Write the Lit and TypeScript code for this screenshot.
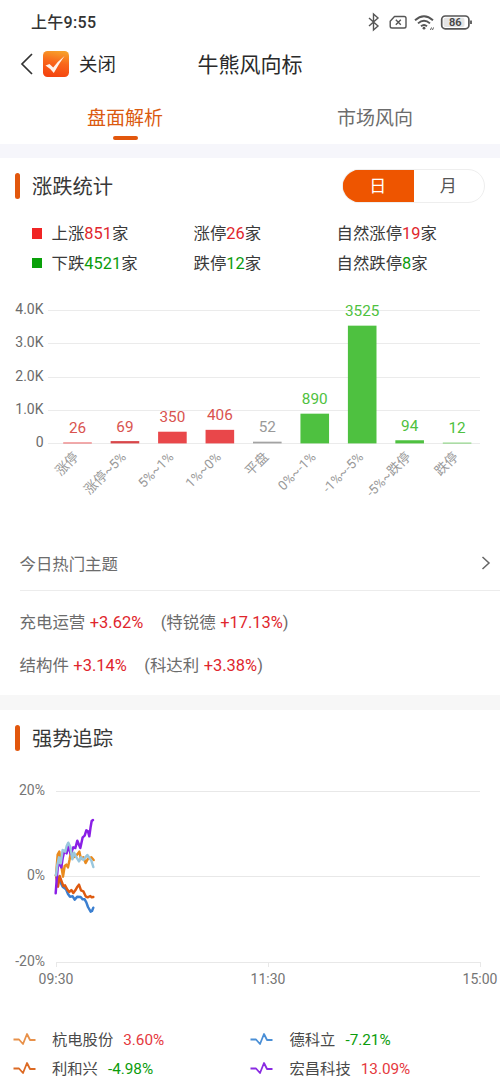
import { LitElement, html, css, svg } from "lit";
import { customElement, property } from "lit/decorators.js";

const RED = "#e9474a";
const GREEN = "#4ec140";
const GRAY = "#999999";

interface Bar {
  name: string;
  value: number;
  color: string;
  ink: string;
}

const BARS: Bar[] = [
  { name: "涨停", value: 26, color: RED, ink: "#d9534f" },
  { name: "涨停~5%", value: 69, color: "#d9474a", ink: "#d9534f" },
  { name: "5%~1%", value: 350, color: RED, ink: "#d9534f" },
  { name: "1%~0%", value: 406, color: RED, ink: "#d9534f" },
  { name: "平盘", value: 52, color: "#a3a3a3", ink: GRAY },
  { name: "0%~-1%", value: 890, color: GREEN, ink: GREEN },
  { name: "-1%~-5%", value: 3525, color: GREEN, ink: GREEN },
  { name: "-5%~跌停", value: 94, color: GREEN, ink: GREEN },
  { name: "跌停", value: 12, color: GREEN, ink: GREEN },
];

@customElement("bar-chart")
class BarChart extends LitElement {
  static styles = css`
    :host { display: block; height: 210px; }
    svg { display: block; }
    text { font-family: Roboto, "Noto Sans CJK SC", sans-serif; }
    .tick { font-size: 14px; fill: #6b6b6b; text-anchor: end; }
    .value { font-size: 15.3px; text-anchor: middle; }
    .name { font-size: 13.3px; fill: #999; text-anchor: end; }
  `;

  render() {
    const base = 148.4;
    const unit = 33.4 / 1000;
    return html`<svg width="500" height="210" viewBox="0 0 500 210">
      ${[0, 1, 2, 3, 4].map((k) => {
        const y = Math.round(base - k * 1000 * unit) + 0.5;
        return svg`<line x1="48" x2="480" y1=${y} y2=${y} stroke="#ebebeb"></line>
          <text class="tick" x="43.5" y=${y + 3.8}>${k ? k + ".0K" : "0"}</text>`;
      })}
      ${BARS.map((b, i) => {
        const x = 77.5 + i * 47.45;
        const h = Math.max(b.value * unit, 0.7);
        return svg`<rect x=${x - 14.3} y=${base - h} width="28.6" height=${h} fill=${b.color}></rect>
          <text class="value" x=${x} y=${base - h - 9.5} fill=${b.ink}>${b.value}</text>
          <text class="name" transform="translate(${x + 2} ${162.8}) rotate(-45)">${b.name}</text>`;
      })}
    </svg>`;
  }
}

const SERIES = [
  { color: "#3b7fd0", points: "168,316 174,322 178,330 188,350 198,358 204,372 210,380 218,379 224,389 232,380 242,381 248,388 254,388 259,397 264,411 272,425 276,423 280,413" },
  { color: "#de5a10", points: "168,315 174,350 179,318 184,332 190,348 195,346 202,359 208,366 214,360 220,369 226,361 231,352 237,344 243,361 250,364 257,379 263,382 271,378 275,382 280,381" },
  { color: "#e98a1e", points: "168,318 173,254 178,245 182,275 189,320 194,288 199,284 204,292 209,268 214,240 220,262 228,258 238,245 243,267 250,262 257,279 264,266 274,262 281,270" },
  { color: "#8a1fe6", points: "167,370 170,330 174,284 180,285 184,292 188,265 193,243 200,250 205,228 212,252 220,232 226,234 232,212 241,234 248,202 254,197 259,181 264,184 268,199 272,170 275,153 279,150" },
  { color: "#9ac7dd", points: "168,316 172,285 177,262 182,280 188,240 196,245 200,228 205,218 211,231 217,268 222,248 228,260 237,274 243,262 250,270 256,262 262,255 268,263 274,272 280,291" },
];

@customElement("trend-chart")
class TrendChart extends LitElement {
  static styles = css`
    :host { display: block; height: 225px; }
    svg { display: block; }
    text { font: 14px Roboto, sans-serif; fill: #757575; }
    .end { text-anchor: end; }
    .mid { text-anchor: middle; }
  `;

  render() {
    const rows: [string, number][] = [["20%", 21.5], ["0%", 106.5], ["-20%", 192.5]];
    const times: [string, number][] = [["09:30", 56], ["11:30", 268], ["15:00", 480]];
    return html`<svg width="500" height="225" viewBox="0 0 500 225">
      ${rows.map(([t, y]) => svg`<line x1="56" x2="480" y1=${y} y2=${y} stroke="#e8e8e8"></line>
        <text class="end" x="45" y=${y + 3.8}>${t}</text>`)}
      ${times.map(([t, x]) => svg`<line x1=${x + 0.5} x2=${x + 0.5} y1="192" y2="197" stroke="#e8e8e8"></line>
        <text class="mid" x=${x} y="213.8">${t}</text>`)}
      <g transform="scale(0.33333)">
        ${SERIES.map((s) => svg`<polyline points=${s.points} fill="none" stroke=${s.color}
          stroke-width="7.4" stroke-linejoin="round" stroke-linecap="round"></polyline>`)}
      </g>
    </svg>`;
  }
}

@customElement("legend-item")
class LegendItem extends LitElement {
  @property() name = "";
  @property() value = "";
  @property() color = "";

  static styles = css`
    :host { display: flex; align-items: center; height: 29px; font-size: 15.3px; color: #4a4a4a; }
    svg { width: 23px; height: 14px; margin-right: 16.5px; margin-top: -3px; }
    .up, .down { margin-left: 10px; }
    .up { color: #e5393e; }
    .down { color: #0c9c0c; }
  `;

  render() {
    return html`<svg viewBox="0 0 23 14">
        <path d="M0.5 7.5H6L10 12L14 2L17 8H22.5" fill="none" stroke=${this.color} stroke-width="1.8" stroke-linejoin="round"></path>
      </svg><span>${this.name}</span
      ><span class=${this.value.startsWith("-") ? "down" : "up"}>${this.value}</span>`;
  }
}

@customElement("app-root")
class AppRoot extends LitElement {
  static styles = css`
    :host { display: block; width: 500px; height: 1083px; overflow: hidden; background: #fff; color: #333;
      font-family: Roboto, "Noto Sans CJK SC", sans-serif; line-height: 1.2; white-space: nowrap; }
    * { box-sizing: border-box; }
    svg { display: block; flex: none; }
    .status { height: 44px; display: flex; align-items: center; justify-content: space-between; padding: 0 28px 0 31px; }
    .clock { font-size: 16px; font-weight: 500; color: #333; letter-spacing: 0.3px; padding-top: 2px; }
    .nav { height: 40px; display: grid; grid-template-columns: 1fr auto 1fr; align-items: center; }
    .left { display: flex; align-items: center; padding-left: 20px; }
    .logo { margin: 0 10px 0 9px; }
    .close { font-size: 18.4px; color: #2a2a2a; padding-top: 2px; }
    .title { font-size: 21px; color: #2a2a2a; padding-top: 3px; }
    .tabs { height: 60px; display: grid; grid-template-columns: 1fr 1fr; }
    .tab { display: flex; flex-direction: column; align-items: center; font-size: 19px; line-height: 24px; padding-top: 23px; color: #6c6c6c; }
    .tab.on { color: #db5a10; }
    .tab.on::after { content: ""; width: 25px; height: 4px; margin-top: 5px; border-radius: 2px; background: #e2570d; }
    .band { height: 14px; background: #f6f6fb; }
    .band.plain { height: 15px; background: #f7f7f7; }
    .head { height: 56px; display: flex; align-items: center; padding: 0 15.5px 0 15px; font-size: 20.3px; color: #383838; }
    .label { padding-top: 2px; }
    .accent { width: 5px; height: 26px; border-radius: 2.5px; background: #e2570d; margin-right: 12px; }
    .toggle { margin-left: auto; width: 143px; height: 34px; border-radius: 17px; overflow: hidden; border: 1px solid #eee;
      display: grid; grid-template-columns: 1fr 1fr; line-height: 32px; text-align: center; font-size: 17px; color: #555; }
    .toggle .on { background: #ee5500; color: #fff; box-shadow: 0 0 0 1px #ee5500; }
    .stats { display: grid; grid-template-columns: 20px 142px 143px auto; padding: 5px 0 0 31.5px; grid-auto-rows: 29.3px;
      align-items: center; font-size: 16.4px; color: #3a3a3a; }
    .stats > span { padding-top: 1px; }
    .box { width: 10.5px; height: 10.5px; background: #f02525; }
    .box.g { background: #09a009; }
    .r { color: #e0262d; }
    .g { color: #0c9c0c; }
    .chart { padding-top: 17.4px; height: 258.4px; }
    .themes { display: flex; justify-content: space-between; align-items: center; height: 54px; padding: 0 9px 0 19.5px;
      font-size: 16.4px; color: #6c6c6c; }
    .caption { padding-top: 3px; }
    .rule { height: 1px; margin-left: 20px; background: #ececec; }
    .hot { height: 104px; padding: 11px 0 0 19.5px; font-size: 16.45px; line-height: 42.7px; color: #6c6c6c; }
    .row { display: flex; }
    .row .r { margin-left: 4.5px; }
    .pair { margin-left: 17.5px; }
    .trend { padding-top: 4px; }
    .legend { display: grid; grid-template-columns: 237.5px auto; padding: 31px 0 0 12.5px; }
  `;

  render() {
    return html`
      <div class="status">
        <span class="clock">上午9:55</span>
        <svg width="105" height="20" viewBox="0 0 105 20" fill="none" stroke="#555" stroke-width="1.5">
          <path d="M2 6L11 14L6.5 18V2L11 6L2 14" stroke-width="1.4"></path>
          <path d="M27.5 4.5H37.2Q39 4.5 39 6.3V14.2Q39 16 37.2 16H25Q23.2 16 23.2 14.2V9.2Z" stroke-width="1.4" stroke-linejoin="round"></path>
          <path d="M28.8 7.8L33.8 12.8M33.8 7.8L28.8 12.8" stroke-width="1.4"></path>
          <path d="M48 8.2Q57 0.2 66 8.2M51 11.4Q57 6 63 11.4M54 14.3Q57 11.8 60 14.3" stroke-width="1.9"></path>
          <circle cx="57" cy="16.2" r="1.4" fill="#555" stroke="none"></circle>
          <path d="M63.5 18L64.5 15.5M65.5 18L66.5 15.5" stroke-width="1"></path>
          <rect x="74.7" y="4" width="27.2" height="12.8" rx="3.6" stroke-width="1.7"></rect>
          <rect x="76.5" y="5.8" width="21" height="9.2" rx="2" fill="#e4e4e4" stroke="none"></rect>
          <path d="M104 8.6V12" stroke-width="1.8"></path>
          <text x="88.2" y="14.3" font-size="11" font-weight="600" text-anchor="middle" fill="#444" stroke="none">86</text>
        </svg>
      </div>
      <div class="nav">
        <div class="left">
          <svg width="14" height="22" viewBox="0 0 14 22"><path d="M12 1L2 11L12 21" fill="none" stroke="#333" stroke-width="1.7"></path></svg>
          <svg class="logo" width="26" height="26" viewBox="0 0 26 26">
            <defs><linearGradient id="lg" x1="0.6" y1="0" x2="0.4" y2="1">
              <stop offset="0" stop-color="#f7a02a"></stop><stop offset="0.45" stop-color="#f9661a"></stop><stop offset="1" stop-color="#f4430f"></stop>
            </linearGradient></defs>
            <rect width="26" height="26" rx="4.5" fill="url(#lg)"></rect>
            <path d="M2.5 14.5L6.5 13L10.2 16.6Q14.5 10.5 21.5 5Q16 12.5 10.8 22Q7.5 17.5 2.5 14.5Z" fill="#fff3ea"></path>
          </svg>
          <span class="close">关闭</span>
        </div>
        <span class="title">牛熊风向标</span>
      </div>
      <div class="tabs"><div class="tab on">盘面解析</div><div class="tab">市场风向</div></div>
      <div class="band"></div>
      <div class="head"><i class="accent"></i><span class="label">涨跌统计</span>
        <div class="toggle"><span class="on">日</span><span>月</span></div>
      </div>
      <div class="stats">
        <i class="box"></i><span>上涨<span class="r">851</span>家</span><span>涨停<span class="r">26</span>家</span><span>自然涨停<span class="r">19</span>家</span>
        <i class="box g"></i><span>下跌<span class="g">4521</span>家</span><span>跌停<span class="g">12</span>家</span><span>自然跌停<span class="g">8</span>家</span>
      </div>
      <div class="chart"><bar-chart></bar-chart></div>
      <div class="themes"><span class="caption">今日热门主题</span>
        <svg width="10" height="14" viewBox="0 0 10 14"><path d="M1.5 1L8 7L1.5 13" fill="none" stroke="#666" stroke-width="1.5"></path></svg>
      </div>
      <div class="rule"></div>
      <div class="hot">
        <div class="row">充电运营<span class="r">+3.62%</span><span class="pair">(特锐德</span><span class="r">+17.13%</span>)</div>
        <div class="row">结构件<span class="r">+3.14%</span><span class="pair">(科达利</span><span class="r">+3.38%</span>)</div>
      </div>
      <div class="band plain"></div>
      <div class="head"><i class="accent"></i><span class="label">强势追踪</span></div>
      <div class="trend"><trend-chart></trend-chart></div>
      <div class="legend">
        <legend-item name="杭电股份" value="3.60%" color="#e8914a"></legend-item>
        <legend-item name="德科立" value="-7.21%" color="#4a8fd6"></legend-item>
        <legend-item name="利和兴" value="-4.98%" color="#dc6a24"></legend-item>
        <legend-item name="宏昌科技" value="13.09%" color="#8a2be2"></legend-item>
      </div>
    `;
  }
}
